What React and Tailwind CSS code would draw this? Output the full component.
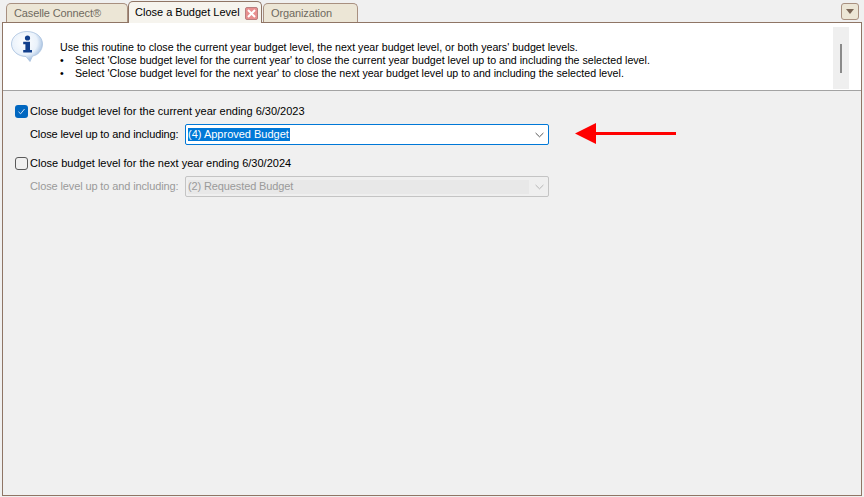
import React from 'react';

const Chevron = ({ color }) => (
  <svg width="9" height="6" viewBox="0 0 9 6" fill="none" stroke={color} strokeWidth="1">
    <path d="M0.6 1 L4.5 4.8 L8.4 1" />
  </svg>
);

const InfoIcon = () => (
  <svg width="32" height="31" viewBox="0 0 32 31">
    <defs>
      <radialGradient id="bubble" cx="0.42" cy="0.36" r="0.68">
        <stop offset="0" stopColor="#ffffff" />
        <stop offset="0.6" stopColor="#eaf2fb" />
        <stop offset="1" stopColor="#8fb0d8" />
      </radialGradient>
    </defs>
    <path d="M16 0.5 C25 0.5 31.5 6 31.5 13 C31.5 19.5 26.5 24.5 21.5 25 L19 30.5 L15 25.5 C7 25.5 0.5 20 0.5 13 C0.5 6 7 0.5 16 0.5 Z" fill="url(#bubble)" stroke="#a9c1de" strokeWidth="0.8" />
    <circle cx="16.5" cy="7" r="2.6" fill="#123f8c" />
    <path d="M12.2 10.8 H19 V19 H21 V21.5 H12.2 V19 H14.4 V13.2 H12.2 Z" fill="#123f8c" />
  </svg>
);

const CloseIcon = () => (
  <div className="mt-[2px] flex h-[13px] w-[13px] items-center justify-center rounded-[2px] border border-[#b98080] bg-[#e88f8f]">
    <svg width="9" height="9" viewBox="0 0 9 9" stroke="#ffffff" strokeWidth="2">
      <path d="M1 1 L8 8 M8 1 L1 8" />
    </svg>
  </div>
);

const Tab = ({ label, className }) => (
  <div className={`flex h-[19px] items-center whitespace-nowrap rounded-t-[5px] border border-b-0 border-[#a89080] bg-[#ece6d6] pl-[7px] tracking-[-0.12px] text-[#6f6a60] ${className}`}>
    {label}
  </div>
);

const Arrow = () => (
  <svg width="102" height="21" viewBox="0 0 102 21" fill="#ff0000">
    <path d="M0 10.5 L21 0 V9 H101 V12 H21 V21 Z" />
  </svg>
);

const App = () => {
  return (
    <div
      className="flex h-[497px] w-[864px] flex-col overflow-hidden whitespace-nowrap bg-[#f0f0f0] text-[11px] leading-[15px] text-black"
      style={{ fontFamily: '"Liberation Sans", Arial, sans-serif' }}
    >
      {/* tab strip */}
      <div className="flex h-[22px] items-end pl-[6px] pr-[5px]">
        <Tab label="Caselle Connect®" className="w-[122px]" />
        <div className="z-10 mb-[-1px] flex h-[22px] w-[134px] items-center justify-between rounded-t-[5px] border border-b-0 border-[#8f7565] bg-[#f6f4ee] pl-[6px] pr-[3px] text-black">
          <span>Close a Budget Level</span>
          <CloseIcon />
        </div>
        <Tab label="Organization" className="ml-[1px] w-[95px]" />
        <div className="mb-[2px] ml-auto flex h-[17px] w-[18px] items-center justify-center rounded-[3px] border border-[#a89080] bg-[#ece6d6]">
          <div className="h-0 w-0 border-x-[4px] border-t-[5px] border-x-transparent border-t-[#7a6555]" />
        </div>
      </div>

      {/* main panel */}
      <div className="mx-[2px] mb-[1px] flex flex-1 flex-col border border-[#8f7565]">
        <div className="flex h-[68px] border-b border-[#a3a3a3] bg-white">
          <div className="pl-[8px] pt-[8px]">
            <InfoIcon />
          </div>
          <div className="ml-[17px] flex-1 pt-[18px] text-[10.65px] leading-[13px]">
            <p>Use this routine to close the current year budget level, the next year budget level, or both years' budget levels.</p>
            <p className="flex"><span className="w-[15px]">•</span>Select 'Close budget level for the current year' to close the current year budget level up to and including the selected level.</p>
            <p className="flex"><span className="w-[15px]">•</span>Select 'Close budget level for the next year' to close the next year budget level up to and including the selected level.</p>
          </div>
          <div className="mb-[1px] mr-[12px] mt-[4px] flex w-[16px] justify-center bg-[#efefef] pt-[17px]">
            <div className="h-[29px] w-[2px] bg-[#8a8a8a]" />
          </div>
        </div>

        <div className="flex flex-col pl-[12px] pt-[13px]">
          <div className="flex items-center">
            <div className="flex h-[13px] w-[13px] items-center justify-center rounded-[3px] bg-[#0067c0]">
              <svg width="9" height="9" viewBox="0 0 9 9" fill="none" stroke="#cfe3f7" strokeWidth="1">
                <path d="M1.5 4.8 L3.6 6.8 L7.5 2" />
              </svg>
            </div>
            <span className="ml-[2px]">Close budget level for the current year ending 6/30/2023</span>
          </div>
          <div className="mt-[5px] flex items-center">
            <span className="ml-[15px] w-[155px] tracking-[-0.12px]">Close level up to and including:</span>
            <div className="flex h-[21px] w-[364px] items-center justify-between rounded-[2px] border border-[#0078d7] bg-white pl-[2px] pr-[4px]">
              <span className="bg-[#0078d7] pr-[1px] leading-[13px] text-white">(4) Approved Budget</span>
              <Chevron color="#555555" />
            </div>
            <div className="-mt-[1px] ml-[26px] self-start">
              <Arrow />
            </div>
          </div>
          <div className="mt-[11px] flex items-center">
            <div className="h-[13px] w-[13px] rounded-[3px] border border-[#5a5a5a] bg-[#f0f0f0]" />
            <span className="ml-[2px]">Close budget level for the next year ending 6/30/2024</span>
          </div>
          <div className="mt-[5px] flex items-center text-[#9a9a9a]">
            <span className="ml-[15px] w-[155px] tracking-[-0.12px]">Close level up to and including:</span>
            <div className="flex h-[21px] w-[364px] items-center justify-between rounded-[2px] border border-[#c4c4c4] bg-[#efefef] py-[2px] pl-[2px] pr-[4px]">
              <span className="flex h-[14px] w-[341px] items-center bg-[#e8e8e8] tracking-[-0.12px]">(2) Requested Budget</span>
              <Chevron color="#b5b5b5" />
            </div>
          </div>
        </div>
      </div>
    </div>
  );
};

export default App;
